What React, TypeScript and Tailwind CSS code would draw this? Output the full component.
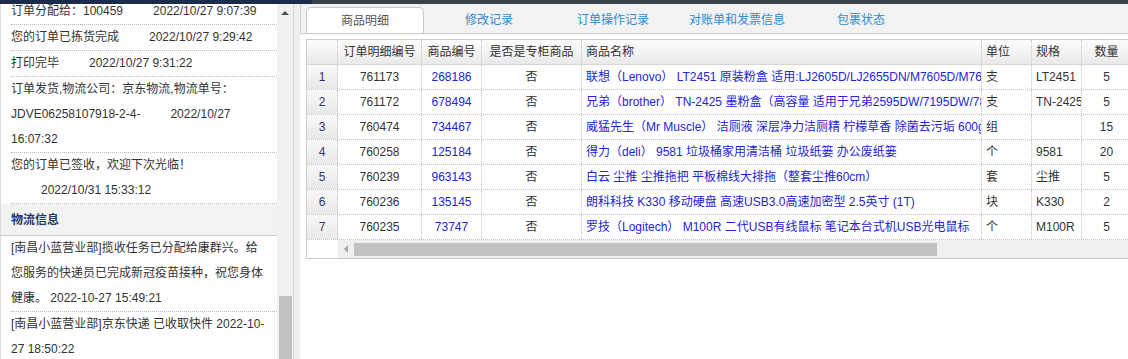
import React from "react";

type Row = {
  detailNo: string;
  goodsNo: string;
  counter: string;
  name: string;
  unit: string;
  spec: string;
  qty: string;
};

const rows: Row[] = [
  { detailNo: "761173", goodsNo: "268186", counter: "否", name: "联想（Lenovo） LT2451 原装粉盒 适用:LJ2605D/LJ2655DN/M7605D/M7650DF/M7655DHF", unit: "支", spec: "LT2451", qty: "5" },
  { detailNo: "761172", goodsNo: "678494", counter: "否", name: "兄弟（brother） TN-2425 墨粉盒（高容量 适用于兄弟2595DW/7195DW/7895DW）", unit: "支", spec: "TN-2425", qty: "5" },
  { detailNo: "760474", goodsNo: "734467", counter: "否", name: "威猛先生（Mr Muscle） 洁厕液 深层净力洁厕精 柠檬草香 除菌去污垢 600g", unit: "组", spec: "", qty: "15" },
  { detailNo: "760258", goodsNo: "125184", counter: "否", name: "得力（deli） 9581 垃圾桶家用清洁桶 垃圾纸篓 办公废纸篓", unit: "个", spec: "9581", qty: "20" },
  { detailNo: "760239", goodsNo: "963143", counter: "否", name: "白云 尘推 尘推拖把 平板棉线大排拖（整套尘推60cm）", unit: "套", spec: "尘推", qty: "5" },
  { detailNo: "760236", goodsNo: "135145", counter: "否", name: "朗科科技 K330 移动硬盘 高速USB3.0高速加密型 2.5英寸 (1T)", unit: "块", spec: "K330", qty: "2" },
  { detailNo: "760235", goodsNo: "73747", counter: "否", name: "罗技（Logitech） M100R 二代USB有线鼠标 笔记本台式机USB光电鼠标", unit: "个", spec: "M100R", qty: "5" },
];

const tabs = ["商品明细", "修改记录", "订单操作记录", "对账单和发票信息", "包裹状态"];

function LogItem({ children }: { children: React.ReactNode }) {
  return (
    <div className="border-b border-dotted border-[#bbbbbb] leading-[25px] whitespace-nowrap">
      {children}
    </div>
  );
}

function Gap({ children }: { children: React.ReactNode }) {
  return <span className="pl-[30px]">{children}</span>;
}

const cell = "shrink-0 border-r border-dotted border-[#c4c4c4] flex items-center overflow-hidden whitespace-nowrap";

export default function App() {
  return (
    <div className="w-[1128px] h-[359px] overflow-hidden bg-white flex flex-col text-[12px] text-[#333] font-['Liberation_Sans','Noto_Sans_CJK_SC',sans-serif]">
      {/* top strip */}
      <div className="h-[4px] shrink-0 flex">
        <div className="w-[312px] bg-[#1b2b4b]" />
        <div className="flex-1 bg-[#39424b]" />
      </div>

      <div className="flex flex-1 min-h-0">
        {/* left log panel */}
        <aside className="w-[277px] shrink-0 border-l border-[#dcdcdc] pl-[10px] overflow-hidden">
          <div className="-mt-[5px] -ml-[10px]">
            <div className="pl-[10px]">
              <LogItem>
                订单分配给：100459<Gap>2022/10/27 9:07:39</Gap>
              </LogItem>
              <LogItem>
                您的订单已拣货完成<Gap>2022/10/27 9:29:42</Gap>
              </LogItem>
              <LogItem>
                打印完毕<Gap>2022/10/27 9:31:22</Gap>
              </LogItem>
              <LogItem>
                订单发货,物流公司：京东物流,物流单号：
                <br />
                JDVE06258107918-2-4-<Gap>2022/10/27</Gap>
                <br />
                16:07:32
              </LogItem>
              <LogItem>
                您的订单已签收，欢迎下次光临！
                <br />
                <Gap>2022/10/31 15:33:12</Gap>
              </LogItem>
            </div>
            <div className="h-[32px] flex items-center pl-[10px] bg-[#f2f2f2] border-b border-[#cccccc] font-bold text-[#1f3864]">
              物流信息
            </div>
            <div className="pl-[10px]">
              <LogItem>
                [南昌小蓝营业部]揽收任务已分配给康群兴。给
                <br />
                您服务的快递员已完成新冠疫苗接种，祝您身体
                <br />
                健康。 2022-10-27 15:49:21
              </LogItem>
              <LogItem>
                [南昌小蓝营业部]京东快递 已收取快件 2022-10-
                <br />
                27 18:50:22
              </LogItem>
            </div>
          </div>
        </aside>

        {/* left scrollbar */}
        <div className="w-[16px] shrink-0 bg-[#f1f1f1] flex flex-col">
          <div className="h-[16px] flex items-center justify-center pt-[2px]">
            <div className="w-0 h-0 border-l-[4px] border-r-[4px] border-b-[4px] border-l-transparent border-r-transparent border-b-[#505050]" />
          </div>
          <div className="h-[276px]" />
          <div className="flex-1 ml-[2px] mr-[1px] bg-[#c1c1c1]" />
        </div>
        <div className="w-[1px] shrink-0 bg-[#d6d6d6]" />
        <div className="w-[6px] shrink-0 bg-[#eeeeee]" />

        {/* right panel */}
        <main className="flex-1 min-w-0 overflow-hidden flex flex-col">
          <div className="h-[30px] shrink-0 bg-[#f2f2f2] border-l border-b border-[#cfcfcf] flex items-end gap-[6px] pl-[5px]">
            {tabs.map((t, i) =>
              i === 0 ? (
                <div
                  key={t}
                  className="w-[118px] h-[26px] shrink-0 flex items-center justify-center bg-white border-t border-l border-r border-[#c8c8c8] rounded-t-[5px] text-[#555]"
                >
                  {t}
                </div>
              ) : (
                <div key={t} className="w-[118px] h-[26px] shrink-0 flex items-center justify-center text-[#2a8dd4]">
                  {t}
                </div>
              )
            )}
          </div>

          {/* grid */}
          <div className="ml-[6px] mt-[5px] w-[827px] shrink-0 border border-[#cccccc]">
            <div className="flex h-[25px] border-b border-[#d6d6d6] bg-linear-to-b from-[#fdfdfd] to-[#e9e9e9]">
              <div className={`${cell} w-[31px]`} />
              <div className={`${cell} w-[84px] justify-center`}>订单明细编号</div>
              <div className={`${cell} w-[60px] justify-center`}>商品编号</div>
              <div className={`${cell} w-[100px] justify-center`}>是否是专柜商品</div>
              <div className={`${cell} w-[400px] pl-[4px]`}>商品名称</div>
              <div className={`${cell} w-[50px] pl-[4px]`}>单位</div>
              <div className={`${cell} w-[50px] pl-[4px]`}>规格</div>
              <div className={`${cell} w-[50px] justify-center`}>数量</div>
            </div>

            {rows.map((r, i) => (
              <div key={r.detailNo} className="flex h-[25px] border-b border-dotted border-[#c4c4c4]">
                <div className={`${cell} w-[31px] justify-center bg-linear-to-b from-[#f8f8f8] to-[#e8e8e8] text-[#33336b]`}>
                  {i + 1}
                </div>
                <div className={`${cell} w-[84px] justify-center`}>{r.detailNo}</div>
                <div className={`${cell} w-[60px] justify-center text-[#2323d8]`}>{r.goodsNo}</div>
                <div className={`${cell} w-[100px] justify-center`}>{r.counter}</div>
                <div className={`${cell} w-[400px] pl-[4px] text-[#2323d8]`}>{r.name}</div>
                <div className={`${cell} w-[50px] pl-[4px]`}>{r.unit}</div>
                <div className={`${cell} w-[50px] pl-[4px]`}>{r.spec}</div>
                <div className={`${cell} w-[50px] justify-center`}>{r.qty}</div>
              </div>
            ))}

            {/* horizontal scrollbar */}
            <div className="flex h-[18px]">
              <div className="w-[31px] shrink-0 bg-white" />
              <div className="flex-1 bg-[#f0f0f0] flex items-center">
                <div className="ml-[6px] w-0 h-0 border-t-[4px] border-b-[4px] border-r-[4px] border-t-transparent border-b-transparent border-r-[#a3a3a3]" />
                <div className="ml-[6px] w-[583px] h-[13px] bg-[#c1c1c1]" />
              </div>
            </div>
          </div>
        </main>
      </div>
    </div>
  );
}
